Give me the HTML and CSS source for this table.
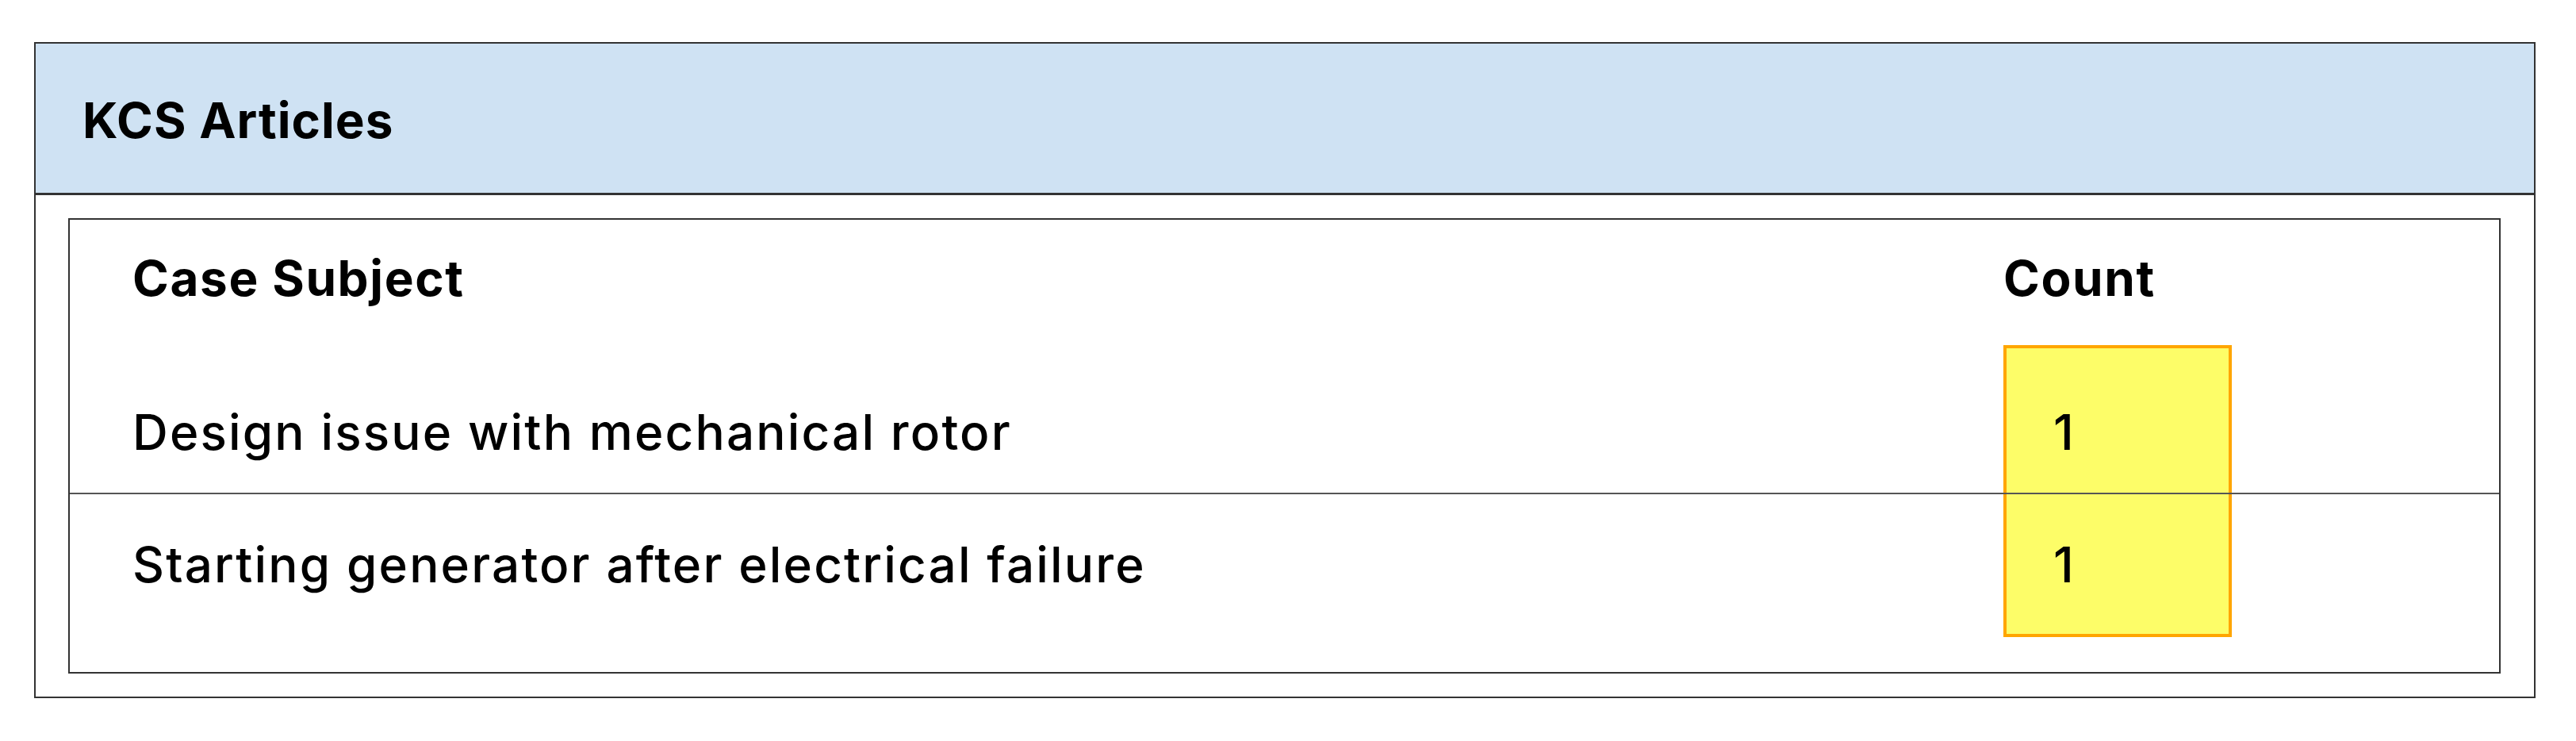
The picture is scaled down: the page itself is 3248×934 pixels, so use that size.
FILE: index.html
```html
<!DOCTYPE html>
<html>
<head>
<meta charset="utf-8">
<link rel="stylesheet" href="styles.css">
</head>
<body>
<div class="panel">
  <div class="panel-header">KCS Articles</div>
  <div class="panel-body">
    <div class="table">
      <div class="row head">
        <div class="cell subject">Case Subject</div>
        <div class="cell count">Count</div>
      </div>
      <div class="row first">
        <div class="cell subject">Design issue with mechanical rotor</div>
        <div class="cell count"><span class="num">1</span></div>
      </div>
      <div class="row second">
        <div class="cell subject">Starting generator after electrical failure</div>
        <div class="cell count"><span class="num">1</span></div>
      </div>
      <div class="highlight"></div>
    </div>
  </div>
</div>
</body>
</html>
```

FILE: styles.css
```css
html, body {
  margin: 0;
  padding: 0;
  background: #ffffff;
}

body {
  font-family: "Inter", "Noto Sans", sans-serif;
  font-variant-ligatures: none;
  color: #000;
  padding: 53px 0 0 43px;
}

.panel {
  width: 3154px;
  box-sizing: border-box;
  border: 2px solid #333;
}

.panel-header {
  background: #cfe2f3;
  border-bottom: 3px solid #333;
  font-weight: 700;
  font-size: 62px;
  line-height: 74px;
  letter-spacing: 1px;
  padding: 60px 0 54px 59px;
}

.panel-body {
  padding: 29px 42px 29px 41px;
}

.table {
  position: relative;
  border: 2px solid #333;
}

.row {
  display: flex;
  font-size: 62px;
  line-height: 74px;
  font-weight: 500;
  letter-spacing: 2.15px;
  position: relative;
  z-index: 1;
}

.row.head {
  font-weight: 700;
  letter-spacing: 1.6px;
  padding: 37px 0 60px;
}

.row.first {
  padding: 60px 0 39px;
  border-bottom: 2px solid #555;
}

.row.second {
  padding: 52px 0 98px;
}

.cell.subject {
  width: 2438px;
  box-sizing: border-box;
  padding-left: 79px;
}

.cell.count {
  flex: 1;
}

.num {
  display: inline-block;
  padding-left: 63px;
}

.highlight {
  position: absolute;
  left: 2438px;
  top: 158px;
  width: 288px;
  height: 368px;
  box-sizing: border-box;
  background: #fdfd68;
  border: 4px solid #ffa500;
  z-index: 0;
}
```
